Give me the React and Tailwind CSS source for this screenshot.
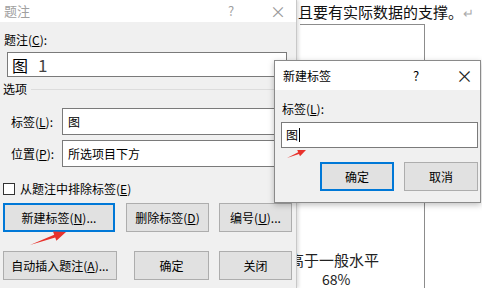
import React from 'react'

const font = { fontFamily: '"Microsoft YaHei", "Noto Sans CJK SC", "Noto Sans", sans-serif' }

const Btn = ({ children, primary, className = '' }) => (
  <div
    className={`flex items-center justify-center bg-[#e1e1e1] text-[12px] text-black ${
      primary ? 'border-2 border-[#0078d7]' : 'border border-[#adadad]'
    } ${className}`}
  >
    {children}
  </div>
)

const CaptionDialog = () => (
  <div className="absolute left-0 top-0 w-[297px] h-[288px] flex flex-col border-r border-[#c8c8c8] shadow-[2px_0_3px_rgba(0,0,0,0.12)]">
    {/* title bar */}
    <div className="h-[22px] bg-white flex items-center relative">
      <span className="pl-[4px] text-[13px] text-[#a0a0a0]">题注</span>
      <span className="absolute left-[228px] text-[13px] text-[#a0a0a0]">?</span>
      <span className="absolute left-[270px] text-[16px] leading-none text-[#9a9a9a]">×</span>
    </div>

    <div className="flex-1 bg-[#f0f0f0] flex flex-col">
      <div className="pt-[10px] pl-[4px] text-[12px] leading-[16px]">
        题注(<span className="underline">C</span>):
      </div>
      <div className="mt-[4px] ml-[7px] w-[280px] h-[25px] bg-white border border-[#7a7a7a] flex items-center pl-[4px] gap-[10px]">
        <span className="text-[16px] text-black">图</span>
        <span className="text-[17px] text-[#444]">1</span>
      </div>

      <div className="mt-[4px] pl-[3px] flex items-center gap-[4px] h-[16px]">
        <span className="text-[12px] leading-[16px]">选项</span>
        <div className="flex-1 h-px bg-[#dcdcdc] mt-[1px]" />
      </div>

      <div className="mt-[11px] flex items-center">
        <span className="w-[62px] pl-[11px] text-[12px]">
          标签(<span className="underline">L</span>):
        </span>
        <div className="w-[225px] h-[27px] bg-white border border-[#7a7a7a] flex items-center pl-[5px] text-[12px]">
          图
        </div>
      </div>
      <div className="mt-[5px] flex items-center">
        <span className="w-[62px] pl-[11px] text-[12px]">
          位置(<span className="underline">P</span>):
        </span>
        <div className="w-[225px] h-[27px] bg-white border border-[#7a7a7a] flex items-center pl-[5px] text-[12px]">
          所选项目下方
        </div>
      </div>

      <div className="mt-[15px] pl-[3px] flex items-center gap-[5px]">
        <div className="w-[12px] h-[12px] bg-white border border-[#333]" />
        <span className="text-[12px] leading-[14px]">
          从题注中排除标签(<span className="underline">E</span>)
        </span>
      </div>

      <div className="mt-[7px] pl-[3px] flex gap-[11px]">
        <Btn primary className="w-[112px] h-[29px]">
          新建标签(<span className="underline">N</span>)...
        </Btn>
        <Btn className="w-[83px] h-[29px]">
          删除标签(<span className="underline">D</span>)
        </Btn>
        <Btn className="w-[73px] h-[29px] -ml-px">
          编号(<span className="underline">U</span>)...
        </Btn>
      </div>

      <div className="mt-[19px] pl-[3px] flex gap-[17px]">
        <Btn className="w-[114px] h-[29px]">
          自动插入题注(<span className="underline">A</span>)...
        </Btn>
        <Btn className="w-[75px] h-[29px]">确定</Btn>
        <Btn className="w-[73px] h-[29px] -ml-[7px]">关闭</Btn>
      </div>
    </div>
  </div>
)

const NewLabelDialog = () => (
  <div className="absolute left-[274px] top-[60px] w-[207px] h-[143px] flex flex-col border border-[#8a8a8a] shadow-[0_2px_6px_rgba(0,0,0,0.25)]">
    <div className="h-[29px] bg-white flex items-center relative">
      <span className="pl-[8px] text-[12px] text-black">新建标签</span>
      <span className="absolute left-[138px] text-[13px] text-black">?</span>
      <span className="absolute left-[181px] text-[17px] leading-none text-[#222]">×</span>
    </div>
    <div className="flex-1 bg-[#f0f0f0] flex flex-col">
      <div className="pt-[11px] pl-[7px] text-[12px] leading-[16px]">
        标签(<span className="underline">L</span>):
      </div>
      <div className="mt-[5px] ml-[6px] w-[197px] h-[26px] bg-white border border-[#7a7a7a] flex items-center pl-[4px] text-[12px]">
        图<span className="ml-px w-px h-[14px] bg-black" />
      </div>
      <div className="mt-[14px] flex justify-end gap-[10px] pr-[2px]">
        <Btn primary className="w-[74px] h-[29px]">确定</Btn>
        <Btn className="w-[74px] h-[29px]">取消</Btn>
      </div>
    </div>
  </div>
)

const Document = () => (
  <div className="absolute left-[297px] top-0 w-[185px] h-[288px] bg-white">
    <div className="pl-[1px] pt-[2px] text-[15px] leading-[20px] text-[#111] whitespace-nowrap">
      且要有实际数据的支撑。<span className="text-[#aaa] text-[13px]">↵</span>
    </div>
    <div className="ml-[3px] mt-[1px] w-[125px] h-[265px] border-t border-r border-[#8c8c8c]" />
  </div>
)

const App = () => (
  <div className="relative w-[482px] h-[288px] overflow-hidden bg-white text-black" style={font}>
    <Document />
    {/* document text partly hidden behind the caption dialog */}
    <div className="absolute left-[289px] top-[250px] text-[15px] leading-[20px] text-[#222] whitespace-nowrap">
      高于一般水平
    </div>
    <div className="absolute left-[322px] top-[270px] text-[14px] leading-[18px] text-[#222]">68%</div>
    <CaptionDialog />
    <NewLabelDialog />

    {/* red annotation arrows */}
    <svg className="absolute left-[28px] top-[228px] w-[40px] h-[20px]" viewBox="0 0 40 20">
      <path d="M2 17 L26.2 6.7 L25 3.4 L38 4 L28.4 12.8 L27.2 9.5 Z" fill="#e8322c" />
    </svg>
    <svg className="absolute left-[284px] top-[146px] w-[26px] h-[16px]" viewBox="0 0 26 16">
      <path d="M3 12 L14.2 6.2 L13.2 3.9 L22 4 L16 10.3 L15 8 Z" fill="#e8322c" />
    </svg>
  </div>
)

export default App
